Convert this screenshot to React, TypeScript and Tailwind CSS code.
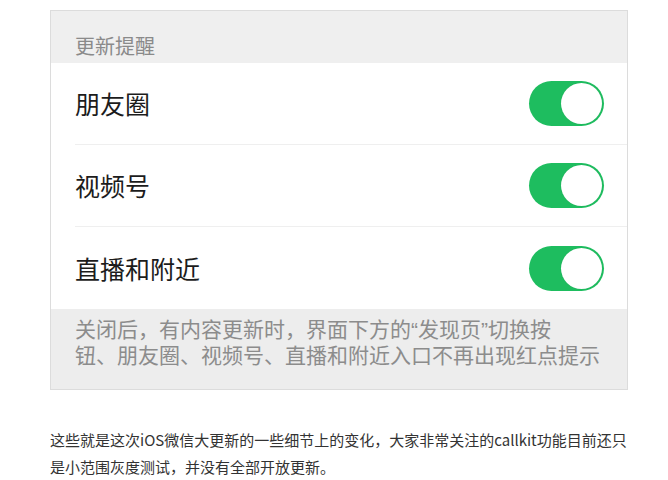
const cjk = "font-['Noto_Sans_CJK_SC',_'Noto_Sans',_sans-serif]";

const rows = ['朋友圈', '视频号', '直播和附近'];

function Toggle() {
  return (
    <div className="flex h-[45px] w-[75px] shrink-0 items-center justify-end rounded-full bg-[#1ebd5f] p-[2px]">
      <div className="h-[41px] w-[41px] rounded-full bg-white shadow-[0_0_1px_rgba(0,0,0,0.15)]" />
    </div>
  );
}

export default function App() {
  return (
    <div className={`min-h-screen bg-white pt-[10px] ${cjk}`}>
      {/* Phone screenshot */}
      <div className="ml-[50px] w-[578px] border border-[#dcdcdc] bg-white">
        <div className="flex h-[52px] items-end bg-[#efefef] pb-[7px] pl-[24px] text-[20px] leading-none text-[#8a8a8a]">
          更新提醒
        </div>

        {rows.map((label, i) => (
          <div key={label} className="pl-[24px]">
            <div
              className={`flex h-[82px] items-center justify-between pr-[23px] ${
                i < rows.length - 1 ? 'border-b border-[#efefef]' : ''
              }`}
            >
              <span className="text-[25px] leading-none text-[#1c1c1c]">{label}</span>
              <Toggle />
            </div>
          </div>
        ))}

        <div className="h-[80px] bg-[#ededed] pl-[24px] pt-[7px] text-[21px] leading-[25px] text-[#8c8c8c]">
          <div className="whitespace-nowrap">
            关闭后，有内容更新时，界面下方的<span className="font-['Liberation_Sans',_sans-serif]">“</span>发现页<span className="font-['Liberation_Sans',_sans-serif]">”</span>切换按
          </div>
          <div className="whitespace-nowrap">钮、朋友圈、视频号、直播和附近入口不再出现红点提示</div>
        </div>
      </div>

      {/* Article text */}
      <p className="ml-[50px] mt-[36px] w-[590px] text-[15px] leading-[27px] text-[#333333]">
        <span className="block whitespace-nowrap">
          这些就是这次iOS微信大更新的一些细节上的变化，大家非常关注的callkit功能目前还只
        </span>
        <span className="block whitespace-nowrap">是小范围灰度测试，并没有全部开放更新。</span>
      </p>
    </div>
  );
}
